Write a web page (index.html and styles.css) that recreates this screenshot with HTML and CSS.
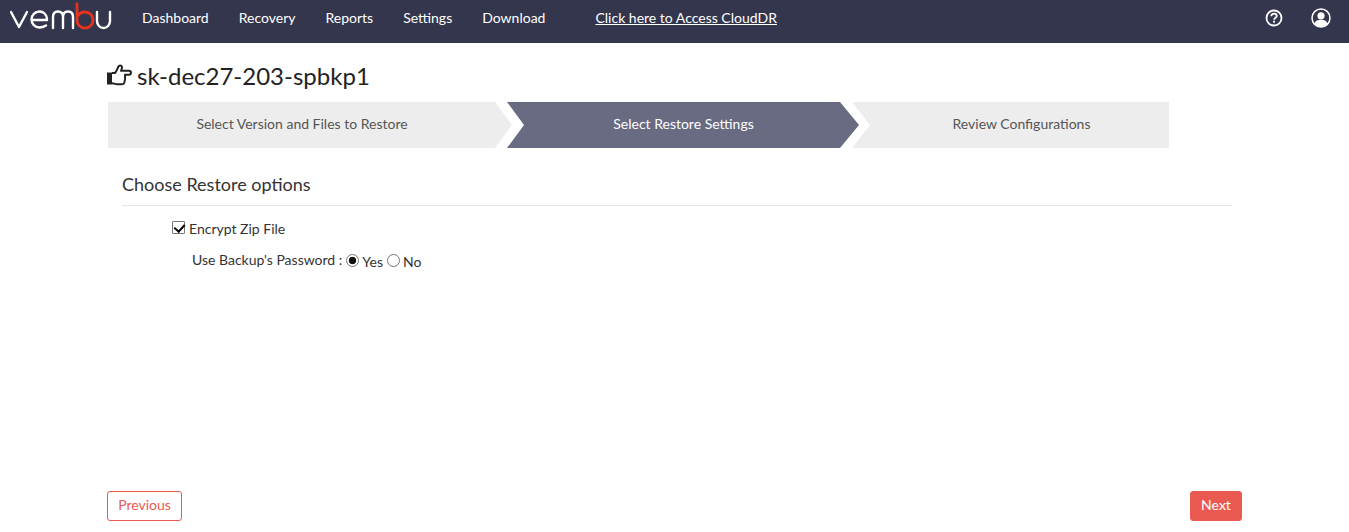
FILE: index.html
```html
<!DOCTYPE html>
<html lang="en">
<head>
<meta charset="utf-8">
<title>Restore</title>
<link rel="stylesheet" href="styles.css">
</head>
<body>
<header class="topbar">
  <svg class="logo" width="102" height="30" viewBox="0 0 102 30" fill="none" stroke-width="2.4" stroke-linecap="round" stroke-linejoin="round">
    <path stroke="#fff" d="M1 11 L9 26 L17 11"/>
    <path stroke="#fff" d="M22 19 H37 C37 13 33 10.500 29.500 10.500 C25 10.500 21.500 14 21.500 18.500 C21.500 23 25 26.500 29.500 26.500 C32 26.500 34 25.800 36 24.500"/>
    <path stroke="#fff" d="M43 27 V16 C43 12.500 45 10.500 48 10.500 C51 10.500 53 12.500 53 16 V27 M53 16 C53 12.500 55 10.500 58 10.500 C61 10.500 63 12.500 63 16 V27"/>
    <path stroke="#e8321e" stroke-width="2.800" d="M67 3 V19 C67 23.500 70.500 27 75 27 C79.500 27 83 23.500 83 19 C83 14.500 79.500 11 75 11 C71.500 11 68.500 13 67 16"/>
    <path stroke="#fff" d="M87 11 V20 C87 24 90 27 93.500 27 C97 27 100 24 100 20 V11"/>
  </svg>
  <nav class="nav">
    <a class="nav-link" href="#">Dashboard</a>
    <a class="nav-link" href="#">Recovery</a>
    <a class="nav-link" href="#">Reports</a>
    <a class="nav-link" href="#">Settings</a>
    <a class="nav-link" href="#">Download</a>
  </nav>
  <a class="cloud-link" href="#">Click here to Access CloudDR</a>
  <div class="top-icons">
    <svg width="18" height="18" viewBox="0 0 18 18" fill="none">
      <circle cx="9" cy="9" r="7.500" stroke="#fff" stroke-width="1.800"/>
      <path d="M6.300 7.200 C6.300 5.500 7.500 4.600 9 4.600 C10.600 4.600 11.800 5.500 11.800 7 C11.800 8.800 9.100 8.900 9.100 10.800" stroke="#fff" stroke-width="1.800"/>
      <rect x="8.100" y="11.800" width="1.900" height="1.900" fill="#fff"/>
    </svg>
    <svg width="20" height="20" viewBox="0 0 20 20" fill="none">
      <circle cx="10" cy="10" r="9" stroke="#fff" stroke-width="1.500"/>
      <circle cx="10" cy="7.800" r="3.600" fill="#fff"/>
      <path d="M3.600 15.600 C4.500 12.800 6.500 11.800 10 11.800 C13.500 11.800 15.500 12.800 16.400 15.600 C14.800 17.800 12.500 18.800 10 18.800 C7.500 18.800 5.200 17.800 3.600 15.600 Z" fill="#fff"/>
    </svg>
  </div>
</header>
<main class="page">
  <h1 class="title">
    <svg class="thumb" width="25" height="22" viewBox="0 0 25 22" fill="none">
      <rect x="0" y="8.500" width="5" height="12" fill="#222"/>
      <path d="M5 9 H8 C9.500 7.500 10.500 4.500 11.300 2.800 C12 1 14.800 1 15 3 C15.100 4.500 14.500 5.500 14 6.800 H22 C24.600 6.800 24.600 10.800 22 10.800 H18 C18.300 13 18 17 17.200 19 C16.800 20 16 20.300 15 20.300 H10 C8.500 20.300 7.500 19.500 5 19.300" stroke="#222" stroke-width="2" stroke-linejoin="round"/>
    </svg>
    <span>sk-dec27-203-spbkp1</span>
  </h1>
  <ol class="steps">
    <li class="step step-first">Select Version and Files to Restore</li>
    <li class="step step-active">Select Restore Settings</li>
    <li class="step step-last">Review Configurations</li>
  </ol>
  <section class="options">
    <h2 class="options-title">Choose Restore options</h2>
    <label class="check-row"><input class="check" type="checkbox" checked> Encrypt Zip File</label>
    <div class="radio-row">
      <span class="radio-label">Use Backup's Password :</span>
      <label class="radio-item"><input class="radio" type="radio" name="pw" checked> Yes</label>
      <label class="radio-item"><input class="radio" type="radio" name="pw"> No</label>
    </div>
  </section>
  <footer class="actions">
    <button class="btn btn-outline" type="button">Previous</button>
    <button class="btn btn-solid" type="button">Next</button>
  </footer>
</main>
</body>
</html>
```
FILE: styles.css
```css
* { box-sizing: border-box; }
html, body { height: 100%; }
body {
  margin: 0;
  display: flex;
  flex-direction: column;
  font-family: Lato, "Liberation Sans", sans-serif;
  font-size: 14px;
  color: #333;
  background: #fff;
  overflow: hidden;
}
.topbar {
  height: 43px;
  flex: none;
  display: flex;
  align-items: center;
  background: #34364d;
  padding: 0 18px 8px 10px;
}
.logo { flex: none; margin-right: 30px; margin-top: -3px; }
.nav { display: flex; gap: 30px; }
.nav-link { color: #fff; text-decoration: none; font-size: 14px; }
.cloud-link { color: #fff; font-size: 14px; text-decoration: underline; margin-left: 50px; }
.top-icons { margin-left: auto; display: flex; align-items: center; gap: 28px; }
.top-icons svg { display: block; }
.page {
  flex: 1;
  display: flex;
  flex-direction: column;
  padding: 0 107px 11px;
  min-height: 0;
}
.title {
  margin: 12px 0 7px;
  height: 40px;
  display: flex;
  align-items: center;
  gap: 5px;
  font-size: 24px;
  font-weight: 400;
  color: #222;
}
.thumb { flex: none; }
.steps {
  list-style: none;
  margin: 0;
  padding: 0 0 0 1px;
  display: flex;
  height: 46px;
}
.step {
  height: 46px;
  display: flex;
  align-items: center;
  justify-content: center;
  padding-bottom: 4px;
  font-size: 14px;
  color: #555;
  background: #ededed;
}
.step-first {
  width: 404px;
  padding-right: 16px;
  clip-path: polygon(0 0, 387px 0, 100% 50%, 387px 100%, 0 100%);
}
.step-active {
  width: 352px;
  margin-left: -5px;
  padding-left: 1px;
  color: #fff;
  background: #686b82;
  clip-path: polygon(0 0, 333px 0, 100% 50%, 333px 100%, 0 100%, 17px 50%);
}
.step-last {
  width: 317px;
  margin-left: -7px;
  padding-left: 22px;
  clip-path: polygon(0 0, 100% 0, 100% 100%, 0 100%, 18px 50%);
}
.options { padding: 0 0 0 15px; width: 1125px; }
.options-title {
  margin: 24px 0 0;
  height: 34px;
  border-bottom: 1px solid #e5e5e5;
  font-size: 18px;
  line-height: 24px;
  font-weight: 400;
  color: #333;
}
.check-row {
  display: flex;
  align-items: center;
  gap: 4px;
  margin: 12px 0 0 50px;
  height: 20px;
}
.check {
  appearance: none;
  position: relative;
  margin: 0;
  width: 13px;
  height: 13px;
  top: -1px;
  border: 1px solid #767676;
  border-radius: 1px;
  background: #fff;
}
.check:checked::after {
  content: "";
  position: absolute;
  left: 3px;
  top: 0;
  width: 5px;
  height: 8px;
  border: solid #000;
  border-width: 0 2px 2px 0;
  transform: rotate(42deg);
}
.radio-row {
  display: flex;
  align-items: center;
  margin: 12px 0 0 70px;
  height: 20px;
}
.radio-label { margin-right: 3px; position: relative; top: -1px; }
.radio-item { display: flex; align-items: center; gap: 3px; margin-right: 3px; position: relative; top: 1px; }
.radio {
  appearance: none;
  margin: 0 0 0 1px;
  width: 13px;
  height: 13px;
  position: relative;
  top: -1px;
  border: 1px solid #767676;
  border-radius: 50%;
  background: #fff;
}
.radio:checked { background: radial-gradient(circle, #111 0, #111 3.400px, #fff 4.100px); }
.actions {
  margin-top: auto;
  display: flex;
  justify-content: space-between;
}
.btn {
  height: 30px;
  font-family: inherit;
  font-size: 14px;
  border-radius: 3px;
  border: 1px solid #eb5a50;
  cursor: pointer;
  padding: 0 0 4px;
}
.btn-outline { width: 75px; background: #fff; color: #eb5a50; }
.btn-solid { width: 52px; background: #eb5a50; color: #fff; }
```
